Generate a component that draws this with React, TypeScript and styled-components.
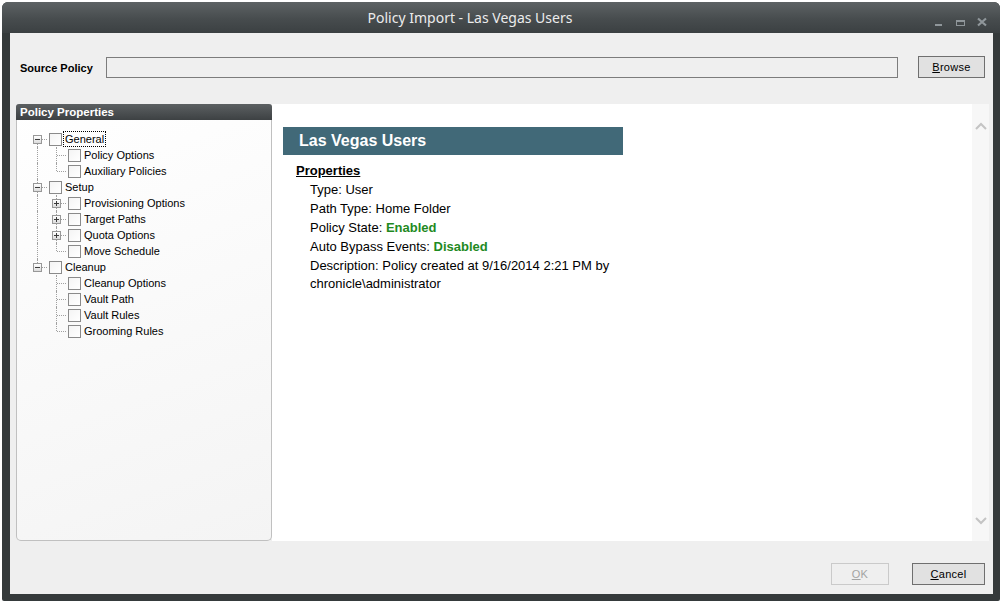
import React from "react";
import styled, { createGlobalStyle } from "styled-components";

const GlobalStyle = createGlobalStyle`
  html, body {
    margin: 0;
    padding: 0;
    background: #ffffff;
  }
  body {
    font-family: "Liberation Sans", Arial, sans-serif;
  }
`;

const Window = styled.div`
  margin: 2px 0 0 2px;
  width: 998px;
  height: 599px;
  background: #353a3b;
  border-radius: 6px 6px 2px 2px;
  display: flex;
  flex-direction: column;
  overflow: hidden;
`;

const TitleBar = styled.div`
  height: 31px;
  flex: none;
  display: flex;
  align-items: center;
  padding-left: 8px;
  background: linear-gradient(#5d6264, #474c4e 55%, #3b4042);
`;

const Title = styled.div`
  flex: 1;
  text-align: center;
  color: #ececec;
  font-family: "Noto Sans", "Open Sans", sans-serif;
  font-size: 14px;
  line-height: 31px;
`;

const Controls = styled.div`
  width: 70px;
  height: 31px;
  display: flex;
`;

const ControlButton = styled.div`
  width: 21px;
  height: 31px;
  svg {
    display: block;
  }
`;

const Client = styled.div`
  flex: 1;
  margin: 0 7px 7px 8px;
  background: #efefef;
  display: flex;
  flex-direction: column;
`;

const SourceRow = styled.div`
  height: 71px;
  padding: 0 8px 2px 10px;
  display: flex;
  align-items: center;
  flex: none;
  box-sizing: border-box;
`;

const SourceLabel = styled.label`
  width: 86px;
  flex: none;
  font-size: 11px;
  font-weight: bold;
  color: #000;
`;

const PathField = styled.div`
  flex: 1;
  height: 21px;
  box-sizing: border-box;
  border: 1px solid #7c7c7c;
  background: #efefef;
`;

const Button = styled.div<{ $width: number; $disabled?: boolean }>`
  width: ${(p) => p.$width}px;
  height: 22px;
  box-sizing: border-box;
  flex: none;
  display: flex;
  align-items: center;
  justify-content: center;
  font-size: 11px;
  letter-spacing: 0.3px;
  color: ${(p) => (p.$disabled ? "#a3a3a3" : "#000")};
  background: ${(p) => (p.$disabled ? "#efefef" : "#e1e1e1")};
  border: 1px solid ${(p) => (p.$disabled ? "#cacaca" : "#6f6f6f")};
  u {
    text-decoration: underline;
  }
`;

const BrowseButton = styled(Button)`
  margin-left: 20px;
  margin-top: -1px;
`;

const Main = styled.div`
  height: 437px;
  flex: none;
  display: flex;
  margin: 0 4px 0 6px;
`;

const LeftPanel = styled.div`
  width: 256px;
  flex: none;
  box-sizing: border-box;
  border: 1px solid #c0c0c0;
  border-top: none;
  border-radius: 4px 4px 5px 5px;
  background: linear-gradient(160deg, #ffffff, #f4f4f4);
  display: flex;
  flex-direction: column;
`;

const PanelHeader = styled.div`
  height: 16px;
  margin: 0 -1px;
  padding-left: 4px;
  border-radius: 3px 3px 0 0;
  background: linear-gradient(#5c6062, #3d4143);
  color: #ffffff;
  font-size: 11.5px;
  font-weight: bold;
  line-height: 16px;
`;

const Tree = styled.div`
  padding: 11px 0 0 11px;
`;

const Row = styled.div`
  height: 16px;
  display: flex;
  align-items: center;
`;

const Guide = styled.div<{ $line: boolean }>`
  width: 19px;
  height: 16px;
  flex: none;
  position: relative;
  &::before {
    content: "";
    display: ${(p) => (p.$line ? "block" : "none")};
    position: absolute;
    left: 9px;
    top: 0;
    bottom: 0;
    border-left: 1px dotted #a0a0a0;
  }
`;

const Connector = styled.div<{ $first: boolean; $last: boolean }>`
  width: 19px;
  height: 16px;
  flex: none;
  position: relative;
  &::before {
    content: "";
    position: absolute;
    left: 9px;
    top: ${(p) => (p.$first ? "8px" : "0")};
    bottom: ${(p) => (p.$last ? "8px" : "0")};
    border-left: 1px dotted #a0a0a0;
  }
  &::after {
    content: "";
    position: absolute;
    left: 10px;
    right: 0;
    top: 8px;
    border-top: 1px dotted #a0a0a0;
  }
`;

const Expander = styled.div`
  position: absolute;
  left: 5px;
  top: 4px;
  width: 9px;
  height: 9px;
  box-sizing: border-box;
  border: 1px solid #989898;
  background: linear-gradient(#ffffff, #dcdcdc);
  z-index: 1;
  svg {
    display: block;
  }
`;

const Check = styled.div`
  width: 13px;
  height: 13px;
  box-sizing: border-box;
  flex: none;
  margin-left: 2px;
  border: 1px solid #8a8a8a;
  background: linear-gradient(135deg, #f4f4f4, #ffffff);
`;

const NodeLabel = styled.span<{ $focus?: boolean }>`
  margin-left: 1px;
  padding: 0 1px;
  height: 14px;
  line-height: 14px;
  border: 1px dotted ${(p) => (p.$focus ? "#000" : "transparent")};
  font-size: 11px;
  color: #000;
  white-space: nowrap;
`;

const Content = styled.div`
  flex: 1;
  background: #ffffff;
  display: flex;
`;

const ContentBody = styled.div`
  flex: 1;
  padding: 23px 0 0 11px;
`;

const Heading = styled.div`
  width: 340px;
  height: 28px;
  box-sizing: border-box;
  padding-left: 16px;
  background: #416978;
  color: #ffffff;
  font-size: 16px;
  font-weight: bold;
  line-height: 28px;
`;

const PropsBlock = styled.div`
  width: 327px;
  margin: 6px 0 0 13px;
  font-size: 13px;
  line-height: 19px;
  color: #000;
`;

const PropsTitle = styled.div`
  font-weight: bold;
  text-decoration: underline;
`;

const PropLine = styled.div`
  padding-left: 14px;
`;

const Wrapped = styled(PropLine)`
  line-height: 18px;
  padding-top: 1px;
`;

const Status = styled.span`
  color: #1f8a1f;
  font-weight: bold;
`;

const Scrollbar = styled.div`
  width: 17px;
  flex: none;
  background: #f7f7f7;
  display: flex;
  flex-direction: column;
  justify-content: space-between;
  align-items: center;
  padding: 18px 0 16px;
  box-sizing: border-box;
  svg {
    display: block;
  }
`;

const Footer = styled.div`
  flex: 1;
  display: flex;
  justify-content: flex-end;
  align-items: flex-start;
  gap: 23px;
  padding: 22px 8px 0 0;
`;

type Node = {
  label: string;
  level: number;
  exp?: "minus" | "plus";
  first?: boolean;
  last?: boolean;
  focus?: boolean;
};

const nodes: Node[] = [
  { label: "General", level: 0, exp: "minus", first: true, focus: true },
  { label: "Policy Options", level: 1 },
  { label: "Auxiliary Policies", level: 1, last: true },
  { label: "Setup", level: 0, exp: "minus" },
  { label: "Provisioning Options", level: 1, exp: "plus" },
  { label: "Target Paths", level: 1, exp: "plus" },
  { label: "Quota Options", level: 1, exp: "plus" },
  { label: "Move Schedule", level: 1, last: true },
  { label: "Cleanup", level: 0, exp: "minus", last: true },
  { label: "Cleanup Options", level: 1 },
  { label: "Vault Path", level: 1 },
  { label: "Vault Rules", level: 1 },
  { label: "Grooming Rules", level: 1, last: true },
];

const ExpandIcon = ({ kind }: { kind: "minus" | "plus" }) => (
  <svg width="7" height="7" viewBox="0 0 7 7">
    <rect x="1" y="3" width="5" height="1" fill="#3c3c3c" />
    {kind === "plus" && <rect x="3" y="1" width="1" height="5" fill="#3c3c3c" />}
  </svg>
);

const TreeView = () => {
  let parentLast = false;
  return (
    <Tree>
      {nodes.map((n) => {
        if (n.level === 0) parentLast = !!n.last;
        return (
          <Row key={n.label}>
            {n.level === 1 && <Guide $line={!parentLast} />}
            <Connector $first={!!n.first} $last={!!n.last}>
              {n.exp && (
                <Expander>
                  <ExpandIcon kind={n.exp} />
                </Expander>
              )}
            </Connector>
            <Check />
            <NodeLabel $focus={n.focus}>{n.label}</NodeLabel>
          </Row>
        );
      })}
    </Tree>
  );
};

const App = () => {
  return (
    <>
      <GlobalStyle />
      <Window>
        <TitleBar>
          <Title>Policy Import - Las Vegas Users</Title>
          <Controls>
            <ControlButton>
              <svg width="21" height="31" viewBox="0 0 21 31">
                <rect x="5" y="22" width="7" height="2" fill="#8f969a" />
              </svg>
            </ControlButton>
            <ControlButton>
              <svg width="21" height="31" viewBox="0 0 21 31">
                <rect x="5.5" y="18.5" width="8" height="5" fill="none" stroke="#8f969a" />
                <rect x="5" y="18" width="9" height="2" fill="#8f969a" />
              </svg>
            </ControlButton>
            <ControlButton>
              <svg width="21" height="31" viewBox="0 0 21 31">
                <path d="M6 16.5 L14 23.5 M14 16.5 L6 23.5" stroke="#8f969a" strokeWidth="2.2" />
              </svg>
            </ControlButton>
          </Controls>
        </TitleBar>
        <Client>
          <SourceRow>
            <SourceLabel>Source Policy</SourceLabel>
            <PathField />
            <BrowseButton $width={67}>
              <span>
                <u>B</u>rowse
              </span>
            </BrowseButton>
          </SourceRow>
          <Main>
            <LeftPanel>
              <PanelHeader>Policy Properties</PanelHeader>
              <TreeView />
            </LeftPanel>
            <Content>
              <ContentBody>
                <Heading>Las Vegas Users</Heading>
                <PropsBlock>
                  <PropsTitle>Properties</PropsTitle>
                  <PropLine>Type: User</PropLine>
                  <PropLine>Path Type: Home Folder</PropLine>
                  <PropLine>
                    Policy State: <Status>Enabled</Status>
                  </PropLine>
                  <PropLine>
                    Auto Bypass Events: <Status>Disabled</Status>
                  </PropLine>
                  <Wrapped>Description: Policy created at 9/16/2014 2:21 PM by chronicle\administrator</Wrapped>
                </PropsBlock>
              </ContentBody>
              <Scrollbar>
                <svg width="12" height="8" viewBox="0 0 12 8">
                  <polyline points="1,7 6,2 11,7" fill="none" stroke="#c4c4c4" strokeWidth="2" />
                </svg>
                <svg width="12" height="8" viewBox="0 0 12 8">
                  <polyline points="1,1 6,6 11,1" fill="none" stroke="#c4c4c4" strokeWidth="2" />
                </svg>
              </Scrollbar>
            </Content>
          </Main>
          <Footer>
            <Button $width={58} $disabled>
              <span>
                <u>O</u>K
              </span>
            </Button>
            <Button $width={73}>
              <span>
                <u>C</u>ancel
              </span>
            </Button>
          </Footer>
        </Client>
      </Window>
    </>
  );
};

export default App;
